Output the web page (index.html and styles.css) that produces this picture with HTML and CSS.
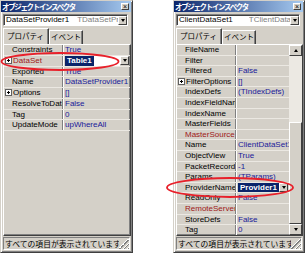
FILE: index.html
```html
<!DOCTYPE html>
<html lang="ja">
<head>
<meta charset="utf-8">
<link rel="stylesheet" href="styles.css">
</head>
<body>
<div class="desk">
  <div class="win">
    <div class="title"><span class="title-text">オブジェクトインスペクタ</span><span class="close">×</span></div>
    <div class="combo combo-left"><span class="combo-name">DataSetProvider1</span><span class="combo-type">TDataSetProvider</span><span class="dd"></span></div>
    <div class="tabs"><div class="tab active">プロパティ</div><div class="tab">イベント</div></div>
    <div class="grid">
      <div class="rows rows-left">
        <div class="row"><div class="name">Constraints</div><div class="val">True</div></div>
        <div class="row"><div class="name ref exp-row"><span class="exp"></span>DataSet</div><div class="val sel"><span class="edit"><span class="hl">Table1</span></span><span class="dd"></span></div></div>
        <div class="row"><div class="name">Exported</div><div class="val">True</div></div>
        <div class="row"><div class="name">Name</div><div class="val">DataSetProvider1</div></div>
        <div class="row"><div class="name exp-row"><span class="exp"></span>Options</div><div class="val">[]</div></div>
        <div class="row"><div class="name">ResolveToDataSet</div><div class="val">False</div></div>
        <div class="row"><div class="name">Tag</div><div class="val">0</div></div>
        <div class="row"><div class="name">UpdateMode</div><div class="val">upWhereAll</div></div>
      </div>
    </div>
    <div class="status"><span class="status-text">すべての項目が表示されています</span><span class="grip"></span></div>
  </div>

  <div class="win win-right">
    <div class="title"><span class="title-text">オブジェクトインスペクタ</span><span class="close">×</span></div>
    <div class="combo combo-right"><span class="combo-name">ClientDataSet1</span><span class="combo-type">TClientDataSet</span><span class="dd"></span></div>
    <div class="tabs"><div class="tab active">プロパティ</div><div class="tab">イベント</div></div>
    <div class="grid grid-scroll">
      <div class="rows rows-right">
        <div class="row"><div class="name">FileName</div><div class="val"></div></div>
        <div class="row"><div class="name">Filter</div><div class="val"></div></div>
        <div class="row"><div class="name">Filtered</div><div class="val">False</div></div>
        <div class="row"><div class="name exp-row"><span class="exp"></span>FilterOptions</div><div class="val">[]</div></div>
        <div class="row"><div class="name">IndexDefs</div><div class="val">(TIndexDefs)</div></div>
        <div class="row"><div class="name">IndexFieldNames</div><div class="val"></div></div>
        <div class="row"><div class="name">IndexName</div><div class="val"></div></div>
        <div class="row"><div class="name">MasterFields</div><div class="val"></div></div>
        <div class="row"><div class="name ref">MasterSource</div><div class="val"></div></div>
        <div class="row"><div class="name">Name</div><div class="val">ClientDataSet1</div></div>
        <div class="row"><div class="name">ObjectView</div><div class="val">True</div></div>
        <div class="row"><div class="name">PacketRecords</div><div class="val">-1</div></div>
        <div class="row"><div class="name">Params</div><div class="val">(TParams)</div></div>
        <div class="row"><div class="name">ProviderName</div><div class="val sel"><span class="edit"><span class="hl">Provider1</span></span><span class="dd"></span></div></div>
        <div class="row"><div class="name">ReadOnly</div><div class="val">False</div></div>
        <div class="row"><div class="name ref">RemoteServer</div><div class="val"></div></div>
        <div class="row"><div class="name">StoreDefs</div><div class="val">False</div></div>
        <div class="row"><div class="name">Tag</div><div class="val">0</div></div>
      </div>
      <div class="vscroll">
        <div class="sbtn"><span class="arrow-up"></span></div>
        <div class="track"></div>
        <div class="thumb"></div>
        <div class="sbtn"><span class="arrow-down"></span></div>
      </div>
    </div>
    <div class="status"><span class="status-text">すべての項目が表示されています</span><span class="grip"></span></div>
  </div>
</div>
<svg class="marks" width="305" height="253" viewBox="0 0 305 253">
  <ellipse cx="60" cy="61.5" rx="58.5" ry="8.5" fill="none" stroke="#e8202a" stroke-width="1.8"/>
  <ellipse cx="230" cy="187.5" rx="63" ry="9.5" fill="none" stroke="#e8202a" stroke-width="1.8"/>
</svg>
</body>
</html>
```
FILE: styles.css
```css
* { box-sizing: border-box; margin: 0; padding: 0; }
html, body { background: #fff; }
body {
  width: 305px; height: 253px; overflow: hidden; position: relative;
  font-family: "Liberation Sans", Arial, sans-serif; font-size: 8px; color: #000;
}
.desk { display: flex; gap: 40px; height: 253px; }
.win {
  width: 133px; height: 253px; flex: none;
  background: #d4d0c8;
  border: 1px solid; border-color: #d4d0c8 #404040 #404040 #d4d0c8;
  box-shadow: inset 1px 1px #fff, inset -1px -1px #808080;
  display: flex; flex-direction: column;
}
.win-right { width: 132px; }

.title {
  height: 11px; margin-right: 1px;
  background: linear-gradient(90deg, #0a246a, #a6caf0);
  display: flex; align-items: center; justify-content: space-between;
  padding-left: 1px; padding-right: 2px;
}
.title-text {
  color: #fff; font-family: "Noto Sans CJK JP", sans-serif; font-weight: bold;
  font-size: 7.5px; letter-spacing: -1.35px; line-height: 10px; white-space: nowrap;
}
.close {
  width: 8px; height: 7px; background: #d4d0c8;
  border: 1px solid; border-color: #fff #404040 #404040 #fff;
  font-size: 7px; line-height: 5px; text-align: center; color: #000;
}

.combo {
  height: 12px; margin: 2px 4px 0 2px;
  background: #fff;
  border: 1px solid; border-color: #808080 #fff #fff #808080;
  box-shadow: inset 1px 1px #404040;
  display: flex; align-items: center; overflow: hidden;
  padding-left: 2px; white-space: nowrap; line-height: 10px;
}
.combo-name { flex: none; }
.combo-type { color: #808080; flex: 1; overflow: hidden; min-width: 0; }
.combo-left .combo-type { margin-left: 8px; }
.combo-right .combo-type { margin-left: 16px; }
.combo .dd { margin-right: 0; }

.dd {
  flex: none; width: 9px; height: 9px; background: #d4d0c8;
  border: 1px solid; border-color: #fff #404040 #404040 #fff;
  display: flex; align-items: center; justify-content: center;
}
.dd::after {
  content: ""; border-left: 2.5px solid transparent; border-right: 2.5px solid transparent;
  border-top: 3px solid #000;
}

.tabs { display: flex; height: 16px; margin: 2px 0 0 2px; align-items: flex-end; }
.tab {
  font-family: "Noto Sans CJK JP", sans-serif; font-size: 7.5px;
  height: 14px; line-height: 12px; padding: 0 1px;
  border: 1px solid; border-bottom: none;
  border-color: #fff #404040 transparent #fff;
  box-shadow: inset -1px 0 #808080;
  white-space: nowrap;
}
.tab.active { height: 16px; width: 46px; padding: 0 3px; line-height: 14px; }

.grid {
  flex: 1; margin: 0 1px 0 2px;
  border: 1px solid; border-color: #fff #404040 #404040 #fff;
  box-shadow: inset -1px -1px #808080;
  display: flex; overflow: hidden;
}
.rows { flex: 1; display: flex; flex-direction: column; }
.row {
  height: 10.6px; flex: none;
  display: grid; grid-template-columns: 59px 1fr;
  border-bottom: 1px solid #ebe8e2;
  line-height: 9.6px; white-space: nowrap;
}
.rows-left .row { height: 10.75px; }
.name {
  padding-left: 8px; overflow: hidden;
  border-right: 1px solid #808080;
  display: flex; align-items: center;
}
.name.exp-row { padding-left: 1px; }
.name.ref { color: #a01818; }
.exp {
  position: relative; flex: none;
  width: 7px; height: 7px; margin-right: 1px;
  border: 1px solid #606060; background: #fff;
}
.exp::before { content: ""; position: absolute; left: 1px; top: 2px; width: 3px; height: 1px; background: #000; }
.exp::after { content: ""; position: absolute; left: 2px; top: 1px; width: 1px; height: 3px; background: #000; }
.val {
  border-left: 1px solid #fff; padding-left: 1px;
  color: #1a1a9a; overflow: hidden;
}
.val.sel { display: flex; align-items: center; padding-left: 1px; padding-right: 1px; }
.edit { flex: 1; background: #fff; height: 10px; display: flex; align-items: center; }
.hl { background: #0a246a; color: #fff; font-weight: bold; padding: 0 2px; line-height: 10px; }

.grid-scroll .rows { flex: 1; }
.vscroll { width: 13px; flex: none; display: flex; flex-direction: column; }
.sbtn {
  height: 11px; flex: none; background: #d4d0c8;
  border: 1px solid; border-color: #fff #404040 #404040 #fff;
  display: flex; align-items: center; justify-content: center;
}
.arrow-up { border-left: 2.5px solid transparent; border-right: 2.5px solid transparent; border-bottom: 3px solid #000; }
.arrow-down { border-left: 2.5px solid transparent; border-right: 2.5px solid transparent; border-top: 3px solid #000; }
.track { height: 66px; flex: none; background: #ece9e3; }
.thumb {
  flex: 1; background: #d4d0c8;
  border: 1px solid; border-color: #fff #404040 #404040 #fff;
}

.status {
  height: 13px; margin: 1px 2px 2px 2px;
  border: 1px solid; border-color: #808080 #fff #fff #808080;
  display: flex; align-items: flex-end;
}
.status-text {
  flex: 1; min-width: 0; overflow: hidden; white-space: nowrap;
  font-family: "Noto Sans CJK JP", sans-serif; font-size: 7.8px; line-height: 11px;
  padding-left: 1px; align-self: center;
}
.grip {
  width: 10px; height: 10px; flex: none;
  background: linear-gradient(135deg, transparent 0 44%, #fff 44% 50%, #808080 50% 58%, transparent 58% 66%, #fff 66% 71%, #808080 71% 79%, transparent 79% 86%, #fff 86% 91%, #808080 91% 100%);
}

.marks { position: absolute; left: 0; top: 0; pointer-events: none; }
```
